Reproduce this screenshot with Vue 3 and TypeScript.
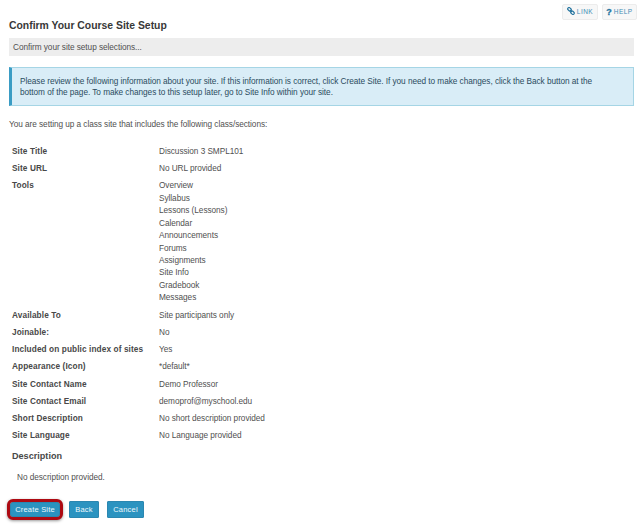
<script setup lang="ts">
interface Row {
  label: string
  values: string[]
}

const rows: Row[] = [
  { label: 'Site Title', values: ['Discussion 3 SMPL101'] },
  { label: 'Site URL', values: ['No URL provided'] },
  {
    label: 'Tools',
    values: [
      'Overview',
      'Syllabus',
      'Lessons (Lessons)',
      'Calendar',
      'Announcements',
      'Forums',
      'Assignments',
      'Site Info',
      'Gradebook',
      'Messages',
    ],
  },
  { label: 'Available To', values: ['Site participants only'] },
  { label: 'Joinable:', values: ['No'] },
  { label: 'Included on public index of sites', values: ['Yes'] },
  { label: 'Appearance (Icon)', values: ['*default*'] },
  { label: 'Site Contact Name', values: ['Demo Professor'] },
  { label: 'Site Contact Email', values: ['demoprof@myschool.edu'] },
  { label: 'Short Description', values: ['No short description provided'] },
  { label: 'Site Language', values: ['No Language provided'] },
]
</script>

<template>
  <main class="page">
    <nav class="actions">
      <a class="action">
        <svg class="chain" viewBox="0 0 16 16" fill="none" stroke="currentColor" stroke-width="2.3">
          <rect x="1.2" y="2" width="7.6" height="5.2" rx="2.4" transform="rotate(42 5 4.6)" />
          <rect x="7.2" y="8.8" width="7.6" height="5.2" rx="2.4" transform="rotate(42 11 11.4)" />
          <path d="M6 6l4 4" />
        </svg>
        <span>LINK</span>
      </a>
      <a class="action help"><b>?</b><span>HELP</span></a>
    </nav>
    <h1>Confirm Your Course Site Setup</h1>
    <p class="instruction">Confirm your site setup selections...</p>
    <div class="notice">
      <span>Please review the following information about your site. If this information is correct, click Create Site. If you need to make changes, click the Back button at the</span><br />
      <span>bottom of the page. To make changes to this setup later, go to Site Info within your site.</span>
    </div>
    <p class="intro">You are setting up a class site that includes the following class/sections:</p>
    <dl class="summary">
      <div v-for="row in rows" :key="row.label" class="row">
        <dt>{{ row.label }}</dt>
        <dd>
          <div v-for="value in row.values" :key="value">{{ value }}</div>
        </dd>
      </div>
    </dl>
    <h2>Description</h2>
    <p class="description">No description provided.</p>
    <div class="buttons">
      <button class="create">Create Site</button>
      <button class="back">Back</button>
      <button class="cancel">Cancel</button>
    </div>
  </main>
</template>

<style>
body {
  margin: 0;
  background: #fff;
}
</style>

<style scoped>
.page {
  box-sizing: border-box;
  width: 640px;
  height: 525px;
  padding: 4px 6px 0 9px;
  overflow: hidden;
  font-family: "Liberation Sans", Arial, sans-serif;
  font-size: 8.25px;
  letter-spacing: -0.05px;
  line-height: 12.45px;
  color: #505050;
}
h1, h2, p, dl, dd {
  margin: 0;
}
.actions {
  display: flex;
  justify-content: flex-end;
  gap: 4px;
  height: 15px;
  margin-right: -3px;
}
.action {
  box-sizing: border-box;
  display: flex;
  align-items: center;
  justify-content: center;
  gap: 2px;
  width: 36px;
  height: 16px;
  border: 1px solid #ececec;
  border-radius: 2px;
  background: #f7f7f7;
  color: #3f8db5;
  font-size: 6.5px;
  letter-spacing: 0.45px;
}
.help {
  width: 35px;
}
.help b {
  font-size: 9px;
  letter-spacing: 0;
  color: #24749f;
  -webkit-text-stroke: 0.3px #24749f;
}
.chain {
  width: 8px;
  height: 8px;
  margin-top: -2px;
  color: #24749f;
}
h1 {
  height: 19px;
  line-height: 13px;
  font-size: 10.4px;
  letter-spacing: 0;
  color: #383838;
}
.instruction {
  box-sizing: border-box;
  height: 18px;
  padding: 3.7px 4px 0;
  background: #ededed;
}
.notice {
  box-sizing: border-box;
  height: 39px;
  margin-top: 11px;
  padding: 9px 0 0 8px;
  border: 1px solid #a5d5e5;
  border-left: 3px solid #3a9cc4;
  background: #d9edf7;
  color: #2b4c60;
  letter-spacing: -0.048px;
  line-height: 10.5px;
  white-space: nowrap;
}
.intro {
  margin-top: 12.7px;
}
.summary {
  margin-top: 12.2px;
}
.row {
  display: flex;
  padding: 2.41px 0 2.41px 3px;
}
dt {
  width: 147px;
  font-weight: bold;
  letter-spacing: 0.1px;
  color: #484848;
}
h2 {
  margin: 3.5px 0 0 3px;
  font-size: 9.1px;
  letter-spacing: 0;
  line-height: 14px;
  color: #484848;
}
.description {
  margin: 9px 0 0 8px;
}
.buttons {
  display: flex;
  align-items: center;
  margin-top: 17.2px;
  margin-left: 1px;
}
button {
  height: 17px;
  padding: 0;
  border: 1px solid #2b87b0;
  border-radius: 1px;
  background: #2b93c0;
  color: #eef8fc;
  font: 7.5px/13px "Liberation Sans", Arial, sans-serif;
  letter-spacing: 0.2px;
}
.create {
  width: 50px;
  height: 15px;
  outline: 3px solid #ad0a12;
  border-radius: 3px;
  box-shadow: 0 1px 3px 3px #999;
}
.back {
  width: 30px;
  margin-left: 9px;
}
.cancel {
  width: 37px;
  margin-left: 8px;
}
</style>
